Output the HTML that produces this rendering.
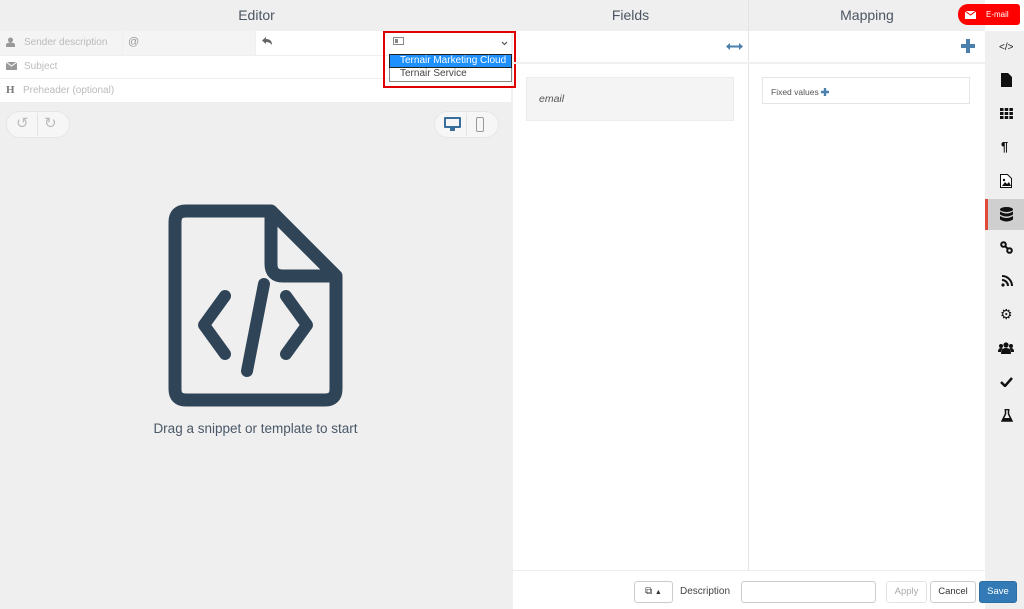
<!DOCTYPE html>
<html><head><meta charset="utf-8"><style>
*{box-sizing:border-box;margin:0;padding:0}
body{width:1024px;height:609px;overflow:hidden;font-family:"Liberation Sans",sans-serif;background:#fff;position:relative}
.abs{position:absolute;white-space:nowrap}
.hdr{top:0;height:31px;background:#efefef;color:#4b5563;font-size:14px;text-align:center;line-height:31px}
.ph{color:#bbb;font-size:10px}
.btn{position:absolute;top:581px;height:22px;border:1px solid #ccc;border-radius:3px;font-size:9.5px;line-height:20px;text-align:center;background:#fff;color:#333}
</style></head><body>
<div class="abs" style="left:0;top:0;width:513px;height:609px;background:#efefef"></div>
<div class="abs hdr" style="left:0;width:513px">Editor</div>
<div class="abs" style="left:0;top:31px;width:122px;height:24px;background:#f4f4f4"></div>
<div class="abs" style="left:123px;top:31px;width:132px;height:24px;background:#f4f4f4"></div>
<div class="abs" style="left:256px;top:31px;width:255px;height:24px;background:#fff"></div>
<div class="abs" style="left:0;top:56px;width:511px;height:22px;background:#fff"></div>
<div class="abs" style="left:0;top:79px;width:511px;height:23px;background:#fff"></div>
<svg class="abs" style="left:6px;top:37px" width="9" height="10" viewBox="0 0 9 10"><circle cx="4.5" cy="3" r="2.5" fill="#999"/><path d="M0 10v-2q0-2.5 4.5-2.5T9 8v2z" fill="#999"/></svg>
<div class="abs ph" style="left:24px;top:37px">Sender description</div>
<div class="abs ph" style="left:128px;top:36px;color:#999;font-size:11px">@</div>
<svg class="abs" style="left:262px;top:37px" width="10" height="8"><path d="M4 0L0 3.5 4 7V5q4 0 6 3Q10 2 4 2z" fill="#666"/></svg>
<svg class="abs" style="left:6px;top:62px" width="11" height="8"><rect width="11" height="8" fill="#999"/><path d="M0 0l5.5 4L11 0" stroke="#fff" fill="none"/></svg>
<div class="abs ph" style="left:24px;top:61px">Subject</div>
<div class="abs" style="left:6px;top:84px;font-family:'Liberation Serif',serif;font-weight:bold;font-size:11px;color:#777">H</div>
<div class="abs ph" style="left:23px;top:85px">Preheader (optional)</div>
<div class="abs" style="left:383px;top:31px;width:133px;height:57px;border:2px solid #e00000"></div>
<svg class="abs" style="left:393px;top:37px" width="11" height="8"><rect x=".5" y=".5" width="10" height="7" fill="#fff" stroke="#888"/><rect x="2" y="2" width="3" height="4" fill="#888"/></svg>
<svg class="abs" style="left:501px;top:41px" width="7" height="5"><path d="M1 1l2.5 2.5L6 1" stroke="#555" fill="none" stroke-width="1.2"/></svg>
<div class="abs" style="left:389px;top:54px;width:123px;height:28px;background:#fff;border:1px solid #888"></div>
<div class="abs" style="left:389px;top:54px;width:123px;height:14px;background:#1e90ff;border:1px solid #222;color:#fff;font-size:10px;line-height:12px;padding-left:10px;overflow:hidden">Ternair Marketing Cloud</div>
<div class="abs" style="left:400px;top:68px;font-size:10px;color:#444">Ternair Service</div>
<div class="abs" style="left:6px;top:111px;width:64px;height:27px;border-radius:14px;background:#f6f6f6;border:1px solid #e6e6e6"></div>
<div class="abs" style="left:37px;top:113px;width:1px;height:23px;background:#e3e3e3"></div>
<div class="abs" style="left:16px;top:114px;font-size:15px;color:#bbb">&#x21BA;</div>
<div class="abs" style="left:44px;top:114px;font-size:15px;color:#bbb">&#x21BB;</div>
<div class="abs" style="left:434px;top:111px;width:65px;height:27px;border-radius:14px;background:#f6f6f6;border:1px solid #e6e6e6"></div>
<div class="abs" style="left:466px;top:113px;width:1px;height:23px;background:#e3e3e3"></div>
<svg class="abs" style="left:444px;top:117px" width="17" height="15"><rect x="0" y="0" width="17" height="11" rx="1" fill="#3a6e9a"/><rect x="2" y="2" width="13" height="7" fill="#f6f6f6"/><rect x="6" y="11" width="5" height="3" fill="#3a6e9a"/></svg>
<svg class="abs" style="left:476px;top:117px" width="8" height="15"><rect x=".5" y=".5" width="7" height="14" rx="1.5" fill="none" stroke="#999"/></svg>
<svg class="abs" style="left:168px;top:204px" width="175" height="203" viewBox="0 0 175 203"><path d="M18 7H103L168 72V185Q168 196 157 196H18Q7 196 7 185V18Q7 7 18 7Z" fill="none" stroke="#2f4557" stroke-width="13" stroke-linejoin="round"/><path d="M103 9V60Q103 72 115 72H166" fill="none" stroke="#2f4557" stroke-width="13" stroke-linejoin="round"/><path d="M57 92L36 121L57 150M118 92L139 121L118 150M96 80L79 167" fill="none" stroke="#2f4557" stroke-width="12" stroke-linecap="round" stroke-linejoin="round"/></svg>
<div class="abs" style="left:0;width:511px;top:421px;text-align:center;font-size:13.5px;color:#4a5868">Drag a snippet or template to start</div>
<div class="abs hdr" style="left:513px;width:235px">Fields</div>
<div class="abs hdr" style="left:749px;width:236px">Mapping</div>
<div class="abs" style="left:748px;top:0;width:1px;height:570px;background:#e4e4e4"></div>
<div class="abs" style="left:513px;top:62px;width:472px;height:2px;background:#f0f0f0"></div>
<svg class="abs" style="left:726px;top:43px" width="17" height="7"><path d="M3 3.5h11" stroke="#4a7fae" stroke-width="2"/><path d="M0 3.5L4 0v7zM17 3.5L13 0v7z" fill="#4a7fae"/></svg>
<svg class="abs" style="left:961px;top:39px" width="14" height="14"><path d="M7 0v14M0 7h14" stroke="#4a7fae" stroke-width="4"/></svg>
<div class="abs" style="left:526px;top:77px;width:208px;height:44px;background:#f4f4f4;border:1px solid #ececec"></div>
<div class="abs" style="left:539px;top:93px;font-size:10.5px;font-style:italic;color:#555">email</div>
<div class="abs" style="left:762px;top:77px;width:208px;height:27px;border:1px solid #e4e4e4"></div>
<div class="abs" style="left:771px;top:87px;font-size:8.5px;color:#555">Fixed values</div>
<svg class="abs" style="left:821px;top:88px" width="8" height="8"><path d="M4 0v8M0 4h8" stroke="#4a7fae" stroke-width="2.4"/></svg>
<div class="abs" style="left:958px;top:4px;width:62px;height:21px;border-radius:10px 3px 3px 10px;background:#ff0000"></div>
<svg class="abs" style="left:965px;top:11px" width="11" height="8"><rect width="11" height="8" fill="#fff"/><path d="M0 0l5.5 4L11 0" stroke="#f00" fill="none"/></svg>
<div class="abs" style="left:986px;top:10px;font-size:8px;color:#fff">E-mail</div>
<div class="abs" style="left:985px;top:31px;width:39px;height:578px;background:#efefef"></div>
<div class="abs" style="left:985px;top:199px;width:39px;height:31px;background:#cfcfcf"></div>
<div class="abs" style="left:985px;top:199px;width:3px;height:31px;background:#e04a3a"></div>
<div class="abs" style="left:999px;top:42px;font-size:10px;color:#222">&lt;/&gt;</div>
<svg class="abs" style="left:1001px;top:73px" width="11" height="14"><path d="M0 0h7l4 4v10H0z" fill="#111"/></svg>
<svg class="abs" style="left:1000px;top:108px" width="13" height="11" fill="#111"><rect x="0" y="0" width="3.5" height="3"/><rect x="4.7" y="0" width="3.5" height="3"/><rect x="9.4" y="0" width="3.5" height="3"/><rect x="0" y="4" width="3.5" height="3"/><rect x="4.7" y="4" width="3.5" height="3"/><rect x="9.4" y="4" width="3.5" height="3"/><rect x="0" y="8" width="3.5" height="3"/><rect x="4.7" y="8" width="3.5" height="3"/><rect x="9.4" y="8" width="3.5" height="3"/></svg>
<div class="abs" style="left:1001px;top:139px;font-size:13px;font-weight:bold;color:#111">¶</div>
<svg class="abs" style="left:1000px;top:174px" width="12" height="14"><path d="M.5.5h7l4 4v9H.5z" fill="#fff" stroke="#111"/><path d="M2 12l3-4 2 2 2-2 2 4z" fill="#111"/><circle cx="4" cy="6" r="1.2" fill="#111"/></svg>
<svg class="abs" style="left:1000px;top:207px" width="13" height="15"><g fill="#111"><ellipse cx="6.5" cy="2.5" rx="6.5" ry="2.5"/><path d="M0 4.5q6.5 4 13 0v3q-6.5 4-13 0z"/><path d="M0 9q6.5 4 13 0v3.5q-6.5 4-13 0z"/></g></svg>
<svg class="abs" style="left:1000px;top:241px" width="13" height="13"><g fill="none" stroke="#111" stroke-width="2"><circle cx="3.5" cy="3.5" r="2.3"/><circle cx="9.5" cy="9.5" r="2.3"/><path d="M5 5l3 3"/></g></svg>
<svg class="abs" style="left:1001px;top:275px" width="12" height="12"><g fill="none" stroke="#111" stroke-width="2"><path d="M1 1a10 10 0 0 1 10 10"/><path d="M1 5a6 6 0 0 1 6 6"/></g><circle cx="2" cy="10" r="1.6" fill="#111"/></svg>
<div class="abs" style="left:1000px;top:306px;font-size:14px;color:#111">&#x2699;</div>
<svg class="abs" style="left:998px;top:342px" width="16" height="12" fill="#111"><circle cx="8" cy="3" r="2.6"/><circle cx="3" cy="4" r="2"/><circle cx="13" cy="4" r="2"/><path d="M3 12q0-6 5-6t5 6z"/><path d="M0 10q0-4 3-4 1 0 2 1-2 1-2 3z"/><path d="M16 10q0-4-3-4-1 0-2 1 2 1 2 3z"/></svg>
<svg class="abs" style="left:1000px;top:377px" width="13" height="10"><path d="M1 5l4 4 7-8" fill="none" stroke="#111" stroke-width="2.5"/></svg>
<svg class="abs" style="left:1001px;top:409px" width="12" height="13"><path d="M3.5 .5h5M4.5 1v4L1 12h10L7.5 5V1" fill="none" stroke="#111" stroke-width="1.5"/><path d="M2.5 9h7l1.5 3H1z" fill="#111"/></svg>
<div class="abs" style="left:513px;top:570px;width:472px;height:39px;background:#fff;border-top:1px solid #eee"></div>
<div class="btn" style="left:634px;width:39px"><span style="font-size:10px">&#x29C9;</span> <span style="font-size:7px">&#x25B2;</span></div>
<div class="abs" style="left:680px;top:586px;font-size:10px;color:#444">Description</div>
<div class="btn" style="left:741px;width:135px"></div>
<div class="btn" style="left:886px;width:41px;color:#aaa;border-color:#e3e3e3">Apply</div>
<div class="btn" style="left:930px;width:46px;color:#333">Cancel</div>
<div class="btn" style="left:979px;width:38px;background:#337ab7;border-color:#2e6da4;color:#fff">Save</div>
</body></html>
